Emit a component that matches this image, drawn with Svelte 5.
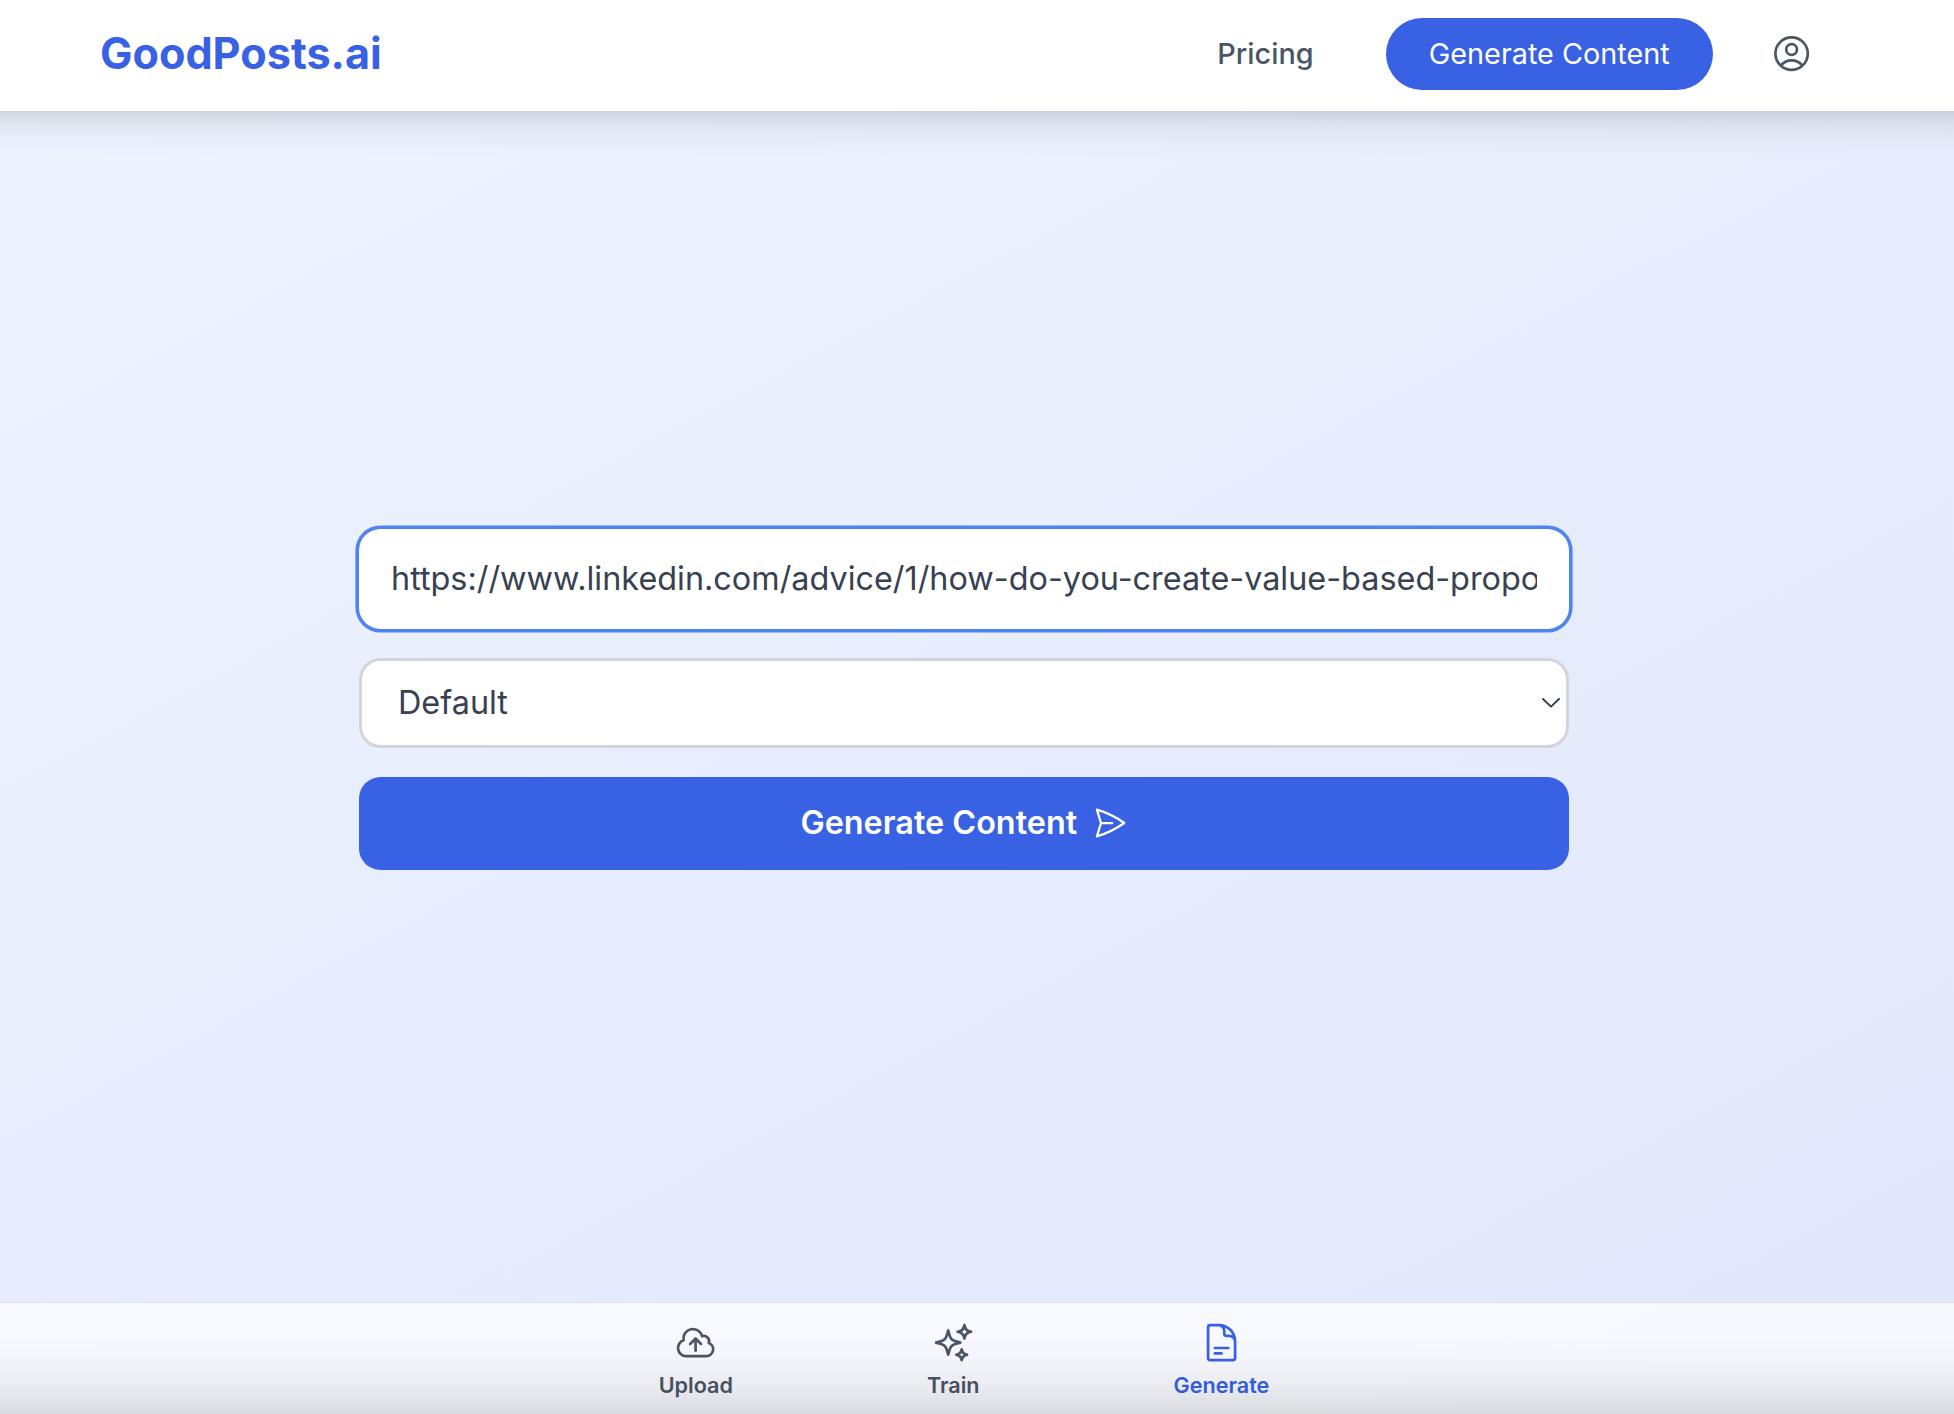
<script>
  let url = 'https://www.linkedin.com/advice/1/how-do-you-create-value-based-proposals';
  let voice = 'Default';
  let activeTab = 'Generate';

  // Bottom navigation, each icon is a 24x24 outline path
  const tabs = [
    {
      name: 'Upload',
      path: 'M12 16.5V9.75m0 0 3 3m-3-3-3 3M6.75 19.5a4.5 4.5 0 0 1-1.41-8.775 5.25 5.25 0 0 1 10.233-2.33 3 3 0 0 1 3.758 3.848A3.752 3.752 0 0 1 18 19.5H6.75Z'
    },
    {
      name: 'Train',
      path: 'M9.813 15.904 9 18.75l-.813-2.846a4.5 4.5 0 0 0-3.09-3.09L2.25 12l2.846-.813a4.5 4.5 0 0 0 3.09-3.09L9 5.25l.813 2.846a4.5 4.5 0 0 0 3.09 3.09L15.75 12l-2.846.813a4.5 4.5 0 0 0-3.09 3.09ZM18.259 8.715 18 9.75l-.259-1.035a3.375 3.375 0 0 0-2.455-2.456L14.25 6l1.036-.259a3.375 3.375 0 0 0 2.455-2.456L18 2.25l.259 1.035a3.375 3.375 0 0 0 2.456 2.456L21.75 6l-1.035.259a3.375 3.375 0 0 0-2.456 2.456ZM16.894 20.567 16.5 21.75l-.394-1.183a2.25 2.25 0 0 0-1.423-1.423L13.5 18.75l1.183-.394a2.25 2.25 0 0 0 1.423-1.423l.394-1.183.394 1.183a2.25 2.25 0 0 0 1.423 1.423l1.183.394-1.183.394a2.25 2.25 0 0 0-1.423 1.423Z'
    },
    {
      name: 'Generate',
      path: 'M19.5 14.25v-2.625a3.375 3.375 0 0 0-3.375-3.375h-1.5A1.125 1.125 0 0 1 13.5 7.125v-1.5a3.375 3.375 0 0 0-3.375-3.375H8.25m0 12.75h7.5m-7.5 3H12M10.5 2.25H5.625c-.621 0-1.125.504-1.125 1.125v17.25c0 .621.504 1.125 1.125 1.125h12.75c.621 0 1.125-.504 1.125-1.125V11.25a9 9 0 0 0-9-9Z'
    }
  ];
</script>

<div class="page">
  <header>
    <a class="logo" href="#home">GoodPosts.ai</a>
    <nav class="links">
      <a class="pricing" href="#pricing">Pricing</a>
      <a class="cta" href="#generate">Generate Content</a>
      <button class="account" type="button" aria-label="Account">
        <svg viewBox="0 0 24 24">
          <path d="M17.982 18.725A7.488 7.488 0 0 0 12 15.75a7.488 7.488 0 0 0-5.982 2.975m11.963 0a9 9 0 1 0-11.963 0m11.963 0A8.966 8.966 0 0 1 12 21a8.966 8.966 0 0 1-5.982-2.275M15 9.75a3 3 0 1 1-6 0 3 3 0 0 1 6 0Z" />
        </svg>
      </button>
    </nav>
  </header>

  <main>
    <form on:submit|preventDefault>
      <input class="url" type="text" aria-label="Link" spellcheck="false" bind:value={url} />
      <div class="select-wrap">
        <select bind:value={voice} aria-label="Voice">
          <option>Default</option>
        </select>
        <svg class="chevron" viewBox="0 0 18 10"><path d="M1 1l8 7.6L17 1" /></svg>
      </div>
      <button class="submit" type="submit">
        Generate Content
        <svg viewBox="0 0 24 24">
          <path d="M6 12 3.269 3.125A59.769 59.769 0 0 1 21.485 12 59.768 59.768 0 0 1 3.27 20.875L5.999 12Zm0 0h7.5" />
        </svg>
      </button>
    </form>
  </main>

  <nav class="tabs">
    {#each tabs as tab}
      <button type="button" class="tab" class:active={activeTab === tab.name} on:click={() => (activeTab = tab.name)}>
        <svg viewBox="0 0 24 24"><path d={tab.path} /></svg>
        <span>{tab.name}</span>
      </button>
    {/each}
  </nav>
</div>

<style>
  :global(html) {
    font-size: 28.8px;
  }

  :global(body) {
    margin: 0;
    overflow: hidden;
  }

  .page {
    display: flex;
    flex-direction: column;
    height: 100vh;
    font-family: Inter, sans-serif;
    color: #374151;
    background: linear-gradient(152deg, #eff4ff, #e1e6fb);
  }

  a {
    text-decoration: none;
  }

  button {
    padding: 0;
    border: none;
    background: none;
    font-family: inherit;
    cursor: pointer;
  }

  svg {
    display: block;
    fill: none;
    stroke: currentColor;
    stroke-width: 1.5;
    stroke-linecap: round;
    stroke-linejoin: round;
  }

  header {
    position: relative;
    display: flex;
    flex: none;
    align-items: center;
    justify-content: space-between;
    box-sizing: border-box;
    height: 111px;
    padding: 0 141px 3px 100px;
    background: #ffffff;
  }

  /* Shadow that keeps its full strength up to both window edges */
  header::after {
    content: '';
    position: absolute;
    top: 100%;
    left: 0;
    right: 0;
    height: 46px;
    background: linear-gradient(
      to bottom,
      rgba(0, 0, 0, 0.13),
      rgba(0, 0, 0, 0.095) 13%,
      rgba(0, 0, 0, 0.06) 28%,
      rgba(0, 0, 0, 0.03) 52%,
      rgba(0, 0, 0, 0.01) 75%,
      transparent
    );
    pointer-events: none;
  }

  .logo {
    padding-bottom: 2px;
    font-size: 1.5rem;
    font-weight: 700;
    color: #3861e3;
  }

  .links {
    display: flex;
    align-items: center;
  }

  .pricing {
    margin-right: 2.5rem;
    padding-bottom: 2px;
    font-size: 1rem;
    font-weight: 500;
    color: #4b5563;
  }

  .cta {
    padding: 0 1.5rem;
    border-radius: 36px;
    font-size: 1rem;
    line-height: 72px;
    color: #ffffff;
    background: #3861e3;
  }

  .account {
    margin-left: 57px;
    color: #4b5563;
  }

  .account svg,
  .tab svg {
    width: 1.5rem;
    height: 1.5rem;
  }

  main {
    display: flex;
    flex: 1;
    justify-content: center;
    padding: 418px 26px 0 0;
  }

  form {
    display: flex;
    flex-direction: column;
    width: 1210px;
  }

  .url,
  select {
    box-sizing: border-box;
    width: 100%;
    border-radius: 0.75rem;
    font-family: inherit;
    font-size: 1.125rem;
    color: #374151;
    background: #ffffff;
    outline: none;
  }

  .url {
    height: 100px;
    padding: 0 32px 2px;
    border: none;
    box-shadow: 0 0 0 3.6px #4f83ee;
  }

  .select-wrap {
    display: grid;
    align-items: center;
    margin: 29px 0;
  }

  .select-wrap > * {
    grid-area: 1 / 1;
  }

  select {
    height: 90px;
    padding: 0 36px 2px;
    border: 3px solid #d1d5db;
    appearance: none;
  }

  .chevron {
    justify-self: end;
    width: 18px;
    height: 10px;
    margin-right: 9px;
    stroke-width: 2;
    pointer-events: none;
  }

  .submit {
    display: flex;
    align-items: center;
    justify-content: center;
    gap: 0.5rem;
    height: 93px;
    padding-bottom: 2px;
    border-radius: 0.75rem;
    font-size: 1.125rem;
    font-weight: 600;
    color: #ffffff;
    background: #3861e3;
  }

  .submit svg {
    width: 1.25rem;
    height: 1.25rem;
  }

  /* The bar darkens towards the lower edge of the window */
  .tabs {
    position: relative;
    display: flex;
    flex: none;
    justify-content: center;
    gap: 194px;
    box-sizing: border-box;
    height: 112px;
    padding: 18px 26px 0 0;
    border-top: 1px solid #e0e3ea;
    background: rgba(251, 253, 255, 0.8);
  }

  .tabs::after {
    content: '';
    position: absolute;
    inset: 0;
    background: linear-gradient(
      to bottom,
      transparent 30%,
      rgba(0, 0, 0, 0.015) 50%,
      rgba(0, 0, 0, 0.055) 75%,
      rgba(0, 0, 0, 0.12)
    );
    pointer-events: none;
  }

  .tab {
    display: flex;
    flex-direction: column;
    align-items: center;
    gap: 7px;
    font-size: 0.75rem;
    font-weight: 600;
    line-height: 1rem;
    color: #4b5563;
  }

  .tab.active {
    color: #3861e3;
  }
</style>
